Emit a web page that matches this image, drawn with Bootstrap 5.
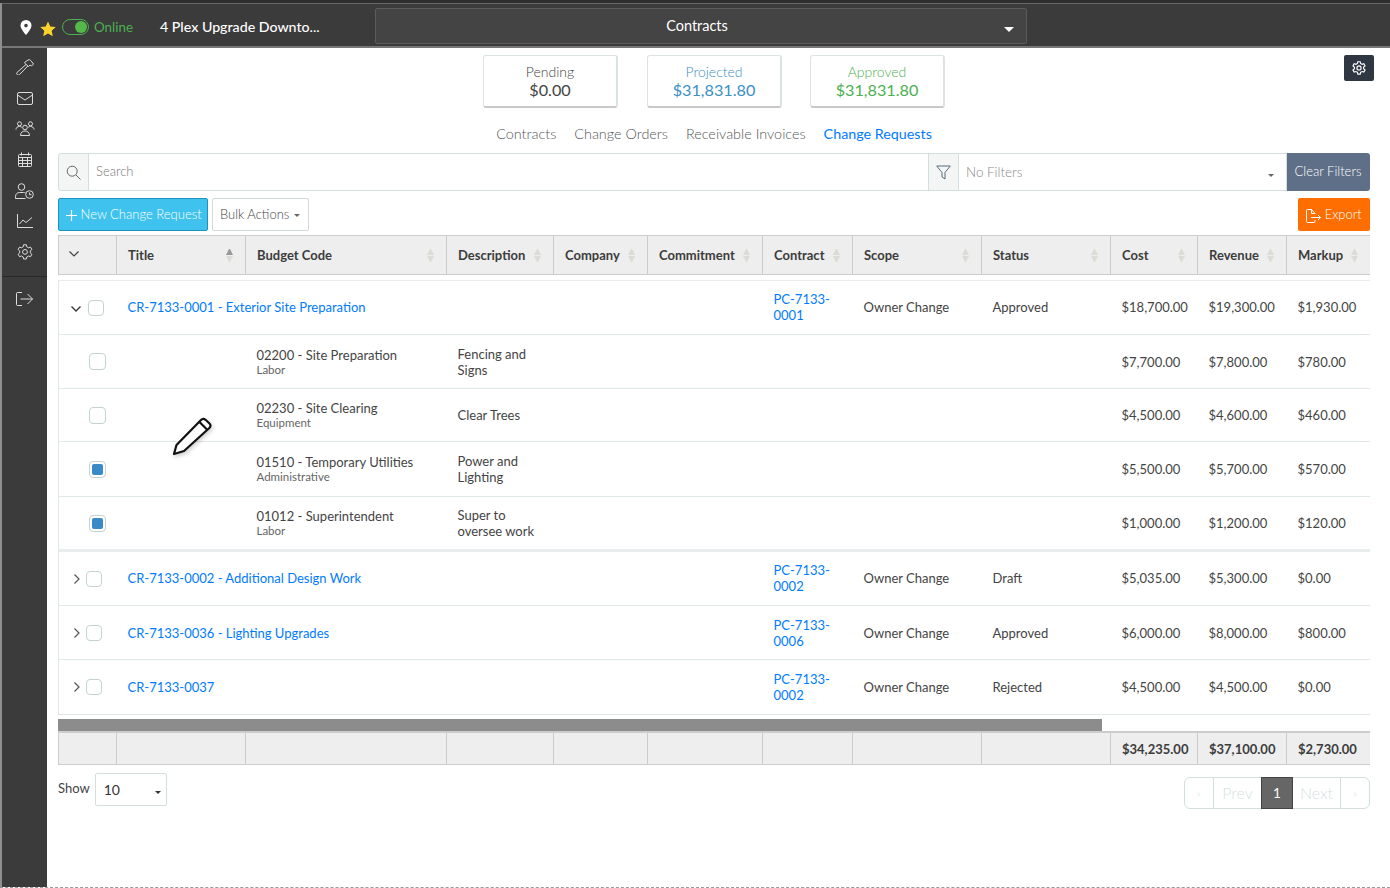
<!DOCTYPE html>
<html lang="en">
<head>
  <meta charset="UTF-8">
  <title>Change Requests</title>
  <link href="https://cdn.jsdelivr.net/npm/bootstrap@5.3.0/dist/css/bootstrap.min.css" rel="stylesheet">
  <style>
    html, body { height: 100%; }
    body { font-family: Lato, "Liberation Sans", sans-serif; font-size: 13px; color: #444; background: #fff; overflow: hidden; }
    a { color: #007bff; text-decoration: none; }
    .app-shell { height: 888px; border-left: 2px solid #8f8f8f; position: relative; border-bottom: 1px dashed #999; }
    .top-strip { height: 3px; background: #2e2e2e; margin-left: -2px; }
    .top-bar { height: 45px; background: #3b3b3b; border-top: 1px solid #666; border-bottom: 2px solid #777; color: #fff; }
    .top-left { padding-top: 4px; }
    .pin-slot { margin-left: 18px; width: 20px; }
    .star-slot { width: 22px; padding-top: 3px; }
    .toggle-pill { width: 27px; height: 16px; border: 1px solid #4caf50; border-radius: 8px; position: relative; margin-right: 5px; }
    .toggle-pill::after { content: ""; position: absolute; right: 1px; top: 1px; width: 12px; height: 12px; background: #55b949; border-radius: 50%; }
    .online-text { color: #4caf50; font-size: 13.4px; width: 66px; }
    .project-name { width: 215px; font-size: 14.2px; font-weight: 500; }
    .module-select { width: 652px; height: 36px; margin-top: 2px; background: #444; border: 1px solid #5c5c5c; border-radius: 2px; font-size: 14.5px; position: relative; padding-right: 8px; }
    .module-select .caret-w { position: absolute; right: 12px; top: 18px; border: 5px solid transparent; border-top-color: #fff; border-bottom: 0; }
    .side-bar { width: 45px; flex: 0 0 45px; background: #3b3b3b; height: 839px; padding-top: 4px; }
    .side-link { height: 30.8px; color: #ddd; }
    .side-rule { border-top: 1px solid #282828; margin: 8px 0 7px; }
    .page-main { flex: 1 1 auto; padding: 7px 20px 0 11px; position: relative; min-width: 0; }
    .gear-btn { position: absolute; right: 16px; top: 7px; width: 30px; height: 26px; background: #2e3742; border-radius: 2px; color: #fff; }
    .stat-box { width: 135px; height: 53px; border: 1px solid #dbe3e3; border-bottom: 2px solid #c9c9c9; border-right-width: 2px; border-radius: 3px; text-align: center; font-weight: 300; line-height: 1; padding-top: 9px; }
    .stat-box .lbl { font-size: 14px; margin-bottom: 3px; }
    .stat-box .amt { font-size: 16.2px; font-weight: 400; }
    .stat-gap { gap: 28px; }
    .stat-first { margin-right: 1px; }
    .stat-blue { color: #3b8fc4; }
    .stat-green { color: #4caf50; }
    .tab-row { gap: 18px; margin-top: 16px; height: 20px; font-size: 14.4px; font-weight: 300; line-height: 20px; }
    .tab-row a { color: #555; }
    .tab-row a.on { color: #007bff; font-weight: 400; font-size: 14.3px; }
    .filter-bar { height: 38px; margin-top: 9px; }
    .filter-bar .input-group-text { width: 31px; padding: 0; justify-content: center; background: #f4f6f6; border-color: #d3dfdf; border-radius: 3px 0 0 3px; }
    .filter-bar .form-control { border-color: #d3dfdf; font-size: 13px; padding: 0 7px; border-radius: 0; font-weight: 300; }
    .filter-bar .form-control::placeholder { color: #777; }
    .filter-bar .addon-mid { border-radius: 0; width: 31px; }
    .filter-pick { width: 329px; flex: 0 0 329px; border: 1px solid #d3dfdf; border-left: 0; color: #888; font-size: 13.4px; font-weight: 300; padding: 0 8px; position: relative; }
    .mini-caret { position: absolute; border: 3px solid transparent; border-top-color: #666; border-bottom: 0; }
    .filter-pick .mini-caret { right: 12px; top: 20px; }
    .btn-clear { width: 84px; flex: 0 0 84px; background: #5f6f88; color: #fff; font-size: 13px; font-weight: 300; border-radius: 0 3px 3px 0; padding: 0; border: 0; }
    .tool-row { margin-top: 7px; height: 33px; }
    .tool-btn { height: 33px; font-size: 13px; padding: 0 7px; font-weight: 300; border-radius: 2px; white-space: nowrap; }
    .btn-new { width: 150px; background: #3fc3ee; border: 1px solid #1c94bd; color: #fff; }
    .btn-bulk { width: 97px; background: #fff; border: 1px solid #d0d8d8; color: #444; margin-left: 4px; position: relative; text-align: left; }
    .btn-bulk .mini-caret { right: 8px; top: 15px; }
    .btn-export { width: 72px; background: #ff6e00; border: 0; color: #fff; }
    .grid-tbl { table-layout: fixed; width: 1312px; margin: 0; border-collapse: separate; border-spacing: 0; color: #444; }
    .grid-tbl td, .grid-tbl th { padding: 0 0 0 11px; vertical-align: middle; border: 0; line-height: 16px; }
    .head-tbl { margin-top: 4px; }
    .head-tbl th, .foot-tbl td { background: #eee; border-right: 1px solid #ccc; border-top: 1px solid #ccc; border-bottom: 1px solid #ccc; font-weight: 700; color: #3c3c3c; }
    .head-tbl th { height: 40px; }
    .head-tbl th:first-child, .foot-tbl td:first-child { border-left: 1px solid #ccc; }
    .head-tbl th:last-child, .foot-tbl td:last-child { border-right: 0; }
    .head-tbl th.chev-head { padding: 0 0 5px 10px; }
    .foot-tbl td { height: 34px; border-top-width: 2px; }
    .th-inner { padding-right: 12px; }
    .sort-ic { display: inline-block; width: 7px; flex: 0 0 7px; }
    .sort-ic::before, .sort-ic::after { content: ""; display: block; border: 3.5px solid transparent; }
    .sort-ic::before { border-top: 0; border-bottom: 6px solid #dcdcd6; margin-bottom: 1px; }
    .sort-ic::after { border-bottom: 0; border-top: 6px solid #dcdcd6; }
    .sort-ic.active-sort::before { border-bottom-color: #999; }
    .body-wrap { margin-top: 5px; border-top: 1px solid #e9eded; border-left: 1px solid #e1e8e8; }
    .body-tbl td { border-bottom: 1px solid #e1e8e8; background: #fff; }
    .body-tbl tr.end-row td { border-bottom: 3px solid #e9eded; }
    .body-tbl tr.cr-row td { padding-bottom: 2px; }
    .r53 { height: 53px; } .r54 { height: 54px; } .r55 { height: 55px; }
    .sub-line { font-size: 11.5px; color: #666; line-height: 14px; display: block; }
    .body-wrap .grid-tbl { width: 1311px; }
    .chk { display: block; width: 16px; height: 16px; border: 1px solid #c4d2d2; border-radius: 4px; background: #fff; position: relative; }
    .sub-chk .chk { width: 17px; height: 17px; }
    .chk.on::after { content: ""; position: absolute; left: 2px; top: 2px; width: 11px; height: 11px; background: #3a8ac9; border-radius: 2px; }
    .body-tbl tr td.chev-cell { padding: 0 0 0 12px; }
    .chev-open { width: 17px; flex: 0 0 17px; }
    .chev-shut { width: 15px; flex: 0 0 15px; padding-left: 3px; padding-bottom: 3px; }
    .sub-chk { padding-left: 30px !important; }
    .h-scroll { margin-top: 4px; height: 12px; width: 1044px; background: #8c8c8c; }
    .foot-row { margin-top: 8px; }
    .show-pick { width: 72px; height: 33px; border: 1px solid #d3dfdf; border-radius: 2px; margin-left: 5px; padding-left: 8px; font-size: 14px; position: relative; color: #333; }
    .show-pick .mini-caret { right: 5px; top: 17px; border-top-color: #333; }
    .show-lbl { font-size: 13px; padding-bottom: 2px; }
    .pager { margin: 4px 0 0; font-size: 12.5px; --bs-pagination-padding-y: 0; --bs-pagination-padding-x: 0; }
    .pager .page-link { height: 32px; line-height: 30px; text-align: center; color: #d5dfdf; border-color: #d3dfdf; background: #fff; font-weight: 300; }
    .pager .w29 { width: 30px; font-size: 10px; }
    .pager .w48 { width: 49px; }
    .pager .w31 { width: 32px; }
    .pager .active .page-link { background: #666; border-color: #444; color: #fff; font-weight: 400; font-size: 13.5px; }
    .pencil-cursor { position: absolute; left: 169px; top: 414px; width: 44px; height: 44px; z-index: 5; filter: drop-shadow(1px 2px 2px rgba(0,0,0,.2)); }
  </style>
</head>
<body>
<div class="app-shell">
  <div class="top-strip"></div>
  <!-- Top bar -->
  <div class="top-bar d-flex align-items-center">
    <div class="d-flex align-items-center top-left">
      <div class="pin-slot">
        <svg width="12" height="15" viewBox="0 0 12 15"><path fill="#fff" fill-rule="evenodd" d="M6 0a5.500 5.500 0 0 0-5.500 5.500C.5 9 6 15 6 15s5.500-6 5.500-9.500A5.500 5.500 0 0 0 6 0zm0 3.800a1.800 1.800 0 1 1 0 3.600 1.800 1.800 0 0 1 0-3.600z"/></svg>
      </div>
      <div class="star-slot">
        <svg width="16" height="16" viewBox="0 0 16 16"><path fill="#fbd22c" d="M8 .5l2.300 5 5.400.6-4 3.700 1.100 5.400L8 12.500l-4.800 2.700 1.100-5.400-4-3.700 5.400-.6z"/></svg>
      </div>
      <div class="toggle-pill"></div>
      <div class="online-text">Online</div>
      <div class="project-name">4 Plex Upgrade Downto...</div>
    </div>
    <div class="module-select d-flex align-items-center justify-content-center">
      <span>Contracts</span>
      <span class="caret-w"></span>
    </div>
  </div>

  <div class="d-flex">
    <!-- Sidebar -->
    <div class="side-bar">
      <div class="side-link d-flex align-items-center justify-content-center">
        <svg width="18" height="16" viewBox="0 0 18 16" fill="none" stroke="currentColor"><path d="M8.500 3.500L12 1c1.500-.5 2-.2 3 .8L17.500 5l-2 2L14 6l-1.500 1.500-3.500-3z"/><path d="M10 5.500L1.200 13.300a1.600 1.600 0 0 0 2.300 2.300L11.800 7"/></svg>
      </div>
      <div class="side-link d-flex align-items-center justify-content-center">
        <svg width="16" height="13" viewBox="0 0 16 13" fill="none" stroke="currentColor"><rect x=".5" y=".5" width="15" height="12" rx="1.500"/><path d="M.5 3l7.500 5 7.500-5"/></svg>
      </div>
      <div class="side-link d-flex align-items-center justify-content-center">
        <svg width="20" height="15" viewBox="0 0 20 15" fill="none" stroke="currentColor"><circle cx="4.500" cy="2.800" r="2"/><circle cx="15.500" cy="2.800" r="2"/><circle cx="10" cy="6.500" r="2.300"/><path d="M1 8.500c0-2 1.500-3 3.500-3 1 0 1.800.3 2.300.8M19 8.500c0-2-1.500-3-3.500-3-1 0-1.800.3-2.300.8M5.500 14.500c0-3 2-4.500 4.500-4.500s4.500 1.500 4.500 4.500z"/></svg>
      </div>
      <div class="side-link d-flex align-items-center justify-content-center">
        <svg width="14" height="15" viewBox="0 0 14 15" fill="none" stroke="currentColor"><rect x=".5" y="2.500" width="13" height="12" rx="1"/><path d="M.5 5.500h13M.5 8.500h13M.5 11.500h13M4.500 5.500v9M9.500 5.500v9M3.500 .5v3M10.500 .5v3"/></svg>
      </div>
      <div class="side-link d-flex align-items-center justify-content-center">
        <svg width="19" height="16" viewBox="0 0 19 16" fill="none" stroke="currentColor"><circle cx="6.500" cy="4" r="3.300"/><path d="M.5 15.500v-2c0-2.500 2-4 4-4h4c1 0 1.500.2 2 .5M.5 15.500h10"/><circle cx="14.500" cy="11.500" r="3.800"/><path d="M14.500 9.500v2.200h2"/></svg>
      </div>
      <div class="side-link d-flex align-items-center justify-content-center">
        <svg width="16" height="14" viewBox="0 0 16 14" fill="none" stroke="currentColor"><path d="M.5 0v13.500H16"/><path d="M2.500 10l3.500-4 3 2.500L15 3.500"/></svg>
      </div>
      <div class="side-link d-flex align-items-center justify-content-center">
        <svg width="16" height="16" viewBox="0 0 16 16" fill="none" stroke="currentColor"><path d="M6.600.8h2.800l.4 2 1.700 1 2-.7 1.400 2.400-1.600 1.400v2l1.600 1.400-1.400 2.400-2-.7-1.700 1-.4 2H6.600l-.4-2-1.700-1-2 .7L1.100 10.300l1.600-1.400v-2L1.100 5.500l1.400-2.400 2 .7 1.700-1z"/><circle cx="8" cy="7.900" r="2.400"/></svg>
      </div>
      <div class="side-rule"></div>
      <div class="side-link d-flex align-items-center justify-content-center">
        <svg width="17" height="14" viewBox="0 0 17 14" fill="none" stroke="currentColor"><path d="M6 .5H1.500a1 1 0 0 0-1 1v11a1 1 0 0 0 1 1H6M4.500 7h12M11.500 2l5 5-5 5"/></svg>
      </div>
    </div>

    <!-- Main -->
    <div class="page-main">
      <div class="gear-btn d-flex align-items-center justify-content-center">
        <svg width="14" height="14" viewBox="0 0 16 16" fill="none" stroke="currentColor" stroke-width="1.300"><path d="M6.600.8h2.800l.4 2 1.700 1 2-.7 1.400 2.400-1.600 1.400v2l1.600 1.400-1.400 2.400-2-.7-1.700 1-.4 2H6.600l-.4-2-1.700-1-2 .7L1.100 10.300l1.600-1.400v-2L1.100 5.500l1.400-2.400 2 .7 1.700-1z"/><circle cx="8" cy="7.900" r="2.400"/></svg>
      </div>

      <div class="d-flex justify-content-center stat-gap">
        <div class="stat-box stat-first"><div class="lbl">Pending</div><div class="amt">$0.00</div></div>
        <div class="stat-box stat-blue"><div class="lbl">Projected</div><div class="amt">$31,831.80</div></div>
        <div class="stat-box stat-green"><div class="lbl">Approved</div><div class="amt">$31,831.80</div></div>
      </div>

      <div class="d-flex justify-content-center tab-row">
        <a href="#">Contracts</a>
        <a href="#">Change Orders</a>
        <a href="#">Receivable Invoices</a>
        <a href="#" class="on">Change Requests</a>
      </div>

      <div class="input-group filter-bar flex-nowrap">
        <span class="input-group-text">
          <svg width="15" height="15" viewBox="0 0 15 15" fill="none" stroke="#666"><circle cx="6.200" cy="6.200" r="5"/><path d="M10 10l4.500 4.500"/></svg>
        </span>
        <input type="text" class="form-control" placeholder="Search">
        <span class="input-group-text addon-mid">
          <svg width="15" height="15" viewBox="0 0 15 15" fill="none" stroke="#5a6a7a"><path d="M.7 1h13.600L9 7.500v6.500l-3-2V7.500z"/></svg>
        </span>
        <div class="filter-pick d-flex align-items-center">No Filters<span class="mini-caret"></span></div>
        <button class="btn-clear" type="button">Clear Filters</button>
      </div>

      <div class="d-flex justify-content-between tool-row">
        <div class="d-flex">
          <button class="tool-btn btn-new" type="button">
            <svg width="11" height="11" viewBox="0 0 11 11" stroke="#fff" stroke-width="1.200"><path d="M5.500 0v11M0 5.500h11"/></svg>
            New Change Request
          </button>
          <button class="tool-btn btn-bulk" type="button">Bulk Actions<span class="mini-caret"></span></button>
        </div>
        <button class="tool-btn btn-export" type="button">
          <svg width="15" height="14" viewBox="0 0 15 14" fill="none" stroke="#fff"><path d="M9 5V4.500L5.500 .5H1.500a1 1 0 0 0-1 1v11a1 1 0 0 0 1 1h6.500a1 1 0 0 0 1-1V11M5.500 .5v4H9M5 8.500h9.500M12 6l2.500 2.500L12 11"/></svg>
          Export
        </button>
      </div>

      <!-- Header -->
      <table class="table grid-tbl head-tbl">
        <colgroup><col style="width:59px"><col style="width:129px"><col style="width:201px"><col style="width:107px"><col style="width:94px"><col style="width:115px"><col style="width:90px"><col style="width:129px"><col style="width:129px"><col style="width:87px"><col style="width:89px"><col style="width:83px"></colgroup>
        <tr>
          <th class="chev-head"><svg width="10" height="6" viewBox="0 0 10 6" fill="none" stroke="#444" stroke-width="1.200"><path d="M.5.500L5 5 9.500.5"/></svg></th>
          <th><div class="d-flex justify-content-between align-items-center th-inner">Title<span class="sort-ic active-sort"></span></div></th>
          <th><div class="d-flex justify-content-between align-items-center th-inner">Budget Code<span class="sort-ic"></span></div></th>
          <th><div class="d-flex justify-content-between align-items-center th-inner">Description<span class="sort-ic"></span></div></th>
          <th><div class="d-flex justify-content-between align-items-center th-inner">Company<span class="sort-ic"></span></div></th>
          <th><div class="d-flex justify-content-between align-items-center th-inner">Commitment<span class="sort-ic"></span></div></th>
          <th><div class="d-flex justify-content-between align-items-center th-inner">Contract<span class="sort-ic"></span></div></th>
          <th><div class="d-flex justify-content-between align-items-center th-inner">Scope<span class="sort-ic"></span></div></th>
          <th><div class="d-flex justify-content-between align-items-center th-inner">Status<span class="sort-ic"></span></div></th>
          <th><div class="d-flex justify-content-between align-items-center th-inner">Cost<span class="sort-ic"></span></div></th>
          <th><div class="d-flex justify-content-between align-items-center th-inner">Revenue<span class="sort-ic"></span></div></th>
          <th><div class="d-flex justify-content-between align-items-center th-inner">Markup<span class="sort-ic"></span></div></th>
        </tr>
      </table>

      <!-- Rows -->
      <div class="body-wrap">
        <table class="table grid-tbl body-tbl">
          <colgroup><col style="width:57.500px"><col style="width:129px"><col style="width:201px"><col style="width:107px"><col style="width:94px"><col style="width:115px"><col style="width:90px"><col style="width:129px"><col style="width:129px"><col style="width:87px"><col style="width:89px"><col style="width:83.500px"></colgroup>
          <tr class="r54 cr-row">
            <td class="chev-cell"><div class="d-flex align-items-center"><span class="chev-open"><svg width="10" height="6" viewBox="0 0 10 6" fill="none" stroke="#333" stroke-width="1.300"><path d="M.5.500L5 5 9.500.5"/></svg></span><span class="chk"></span></div></td>
            <td colspan="2"><a href="#">CR-7133-0001 - Exterior Site Preparation</a></td>
            <td></td><td></td><td></td>
            <td><a href="#">PC-7133-<br>0001</a></td>
            <td>Owner Change</td><td>Approved</td><td>$18,700.00</td><td>$19,300.00</td><td>$1,930.00</td>
          </tr>
          <tr class="r54">
            <td class="sub-chk"><span class="chk"></span></td><td></td>
            <td>02200 - Site Preparation<span class="sub-line">Labor</span></td>
            <td>Fencing and<br>Signs</td><td></td><td></td><td></td><td></td><td></td>
            <td>$7,700.00</td><td>$7,800.00</td><td>$780.00</td>
          </tr>
          <tr class="r53">
            <td class="sub-chk"><span class="chk"></span></td><td></td>
            <td>02230 - Site Clearing<span class="sub-line">Equipment</span></td>
            <td>Clear Trees</td><td></td><td></td><td></td><td></td><td></td>
            <td>$4,500.00</td><td>$4,600.00</td><td>$460.00</td>
          </tr>
          <tr class="r55">
            <td class="sub-chk"><span class="chk on"></span></td><td></td>
            <td>01510 - Temporary Utilities<span class="sub-line">Administrative</span></td>
            <td>Power and<br>Lighting</td><td></td><td></td><td></td><td></td><td></td>
            <td>$5,500.00</td><td>$5,700.00</td><td>$570.00</td>
          </tr>
          <tr class="r55 end-row">
            <td class="sub-chk"><span class="chk on"></span></td><td></td>
            <td>01012 - Superintendent<span class="sub-line">Labor</span></td>
            <td>Super to<br>oversee work</td><td></td><td></td><td></td><td></td><td></td>
            <td>$1,000.00</td><td>$1,200.00</td><td>$120.00</td>
          </tr>
          <tr class="r54 cr-row">
            <td class="chev-cell"><div class="d-flex align-items-center"><span class="chev-shut"><svg width="6" height="10" viewBox="0 0 6 10" fill="none" stroke="#555" stroke-width="1.200"><path d="M.5.500L5 5 .5 9.500"/></svg></span><span class="chk"></span></div></td>
            <td colspan="2"><a href="#">CR-7133-0002 - Additional Design Work</a></td>
            <td></td><td></td><td></td>
            <td><a href="#">PC-7133-<br>0002</a></td>
            <td>Owner Change</td><td>Draft</td><td>$5,035.00</td><td>$5,300.00</td><td>$0.00</td>
          </tr>
          <tr class="r54">
            <td class="chev-cell"><div class="d-flex align-items-center"><span class="chev-shut"><svg width="6" height="10" viewBox="0 0 6 10" fill="none" stroke="#555" stroke-width="1.200"><path d="M.5.500L5 5 .5 9.500"/></svg></span><span class="chk"></span></div></td>
            <td colspan="2"><a href="#">CR-7133-0036 - Lighting Upgrades</a></td>
            <td></td><td></td><td></td>
            <td><a href="#">PC-7133-<br>0006</a></td>
            <td>Owner Change</td><td>Approved</td><td>$6,000.00</td><td>$8,000.00</td><td>$800.00</td>
          </tr>
          <tr class="r55">
            <td class="chev-cell"><div class="d-flex align-items-center"><span class="chev-shut"><svg width="6" height="10" viewBox="0 0 6 10" fill="none" stroke="#555" stroke-width="1.200"><path d="M.5.500L5 5 .5 9.500"/></svg></span><span class="chk"></span></div></td>
            <td colspan="2"><a href="#">CR-7133-0037</a></td>
            <td></td><td></td><td></td>
            <td><a href="#">PC-7133-<br>0002</a></td>
            <td>Owner Change</td><td>Rejected</td><td>$4,500.00</td><td>$4,500.00</td><td>$0.00</td>
          </tr>
        </table>
      </div>

      <div class="h-scroll"></div>

      <!-- Totals -->
      <table class="table grid-tbl foot-tbl">
        <colgroup><col style="width:59px"><col style="width:129px"><col style="width:201px"><col style="width:107px"><col style="width:94px"><col style="width:115px"><col style="width:90px"><col style="width:129px"><col style="width:129px"><col style="width:87px"><col style="width:89px"><col style="width:83px"></colgroup>
        <tr><td></td><td></td><td></td><td></td><td></td><td></td><td></td><td></td><td></td><td>$34,235.00</td><td>$37,100.00</td><td>$2,730.00</td></tr>
      </table>

      <div class="d-flex justify-content-between align-items-start foot-row">
        <div class="d-flex align-items-center">
          <span class="show-lbl">Show</span>
          <div class="show-pick d-flex align-items-center">10<span class="mini-caret"></span></div>
        </div>
        <ul class="pagination pager">
          <li class="page-item disabled"><a class="page-link w29" href="#">&laquo;</a></li>
          <li class="page-item disabled"><a class="page-link w48" href="#">Prev</a></li>
          <li class="page-item active"><a class="page-link w31" href="#">1</a></li>
          <li class="page-item disabled"><a class="page-link w48" href="#">Next</a></li>
          <li class="page-item disabled"><a class="page-link w29" href="#">&raquo;</a></li>
        </ul>
      </div>
    </div>
  </div>

  <!-- Mouse cursor over the table -->
  <svg class="pencil-cursor" viewBox="0 0 44 44" fill="#fff" stroke="#111" stroke-width="2.200" stroke-linejoin="round"><path d="M3 40l2.500-9L30 6c1.500-1.500 3-1.500 4.500-.2l4 3.700c1.500 1.500 1.300 3-.2 4.500L13 37z"/><path d="M28.500 8l7.500 7.500"/></svg>
</div>
</body>
</html>
